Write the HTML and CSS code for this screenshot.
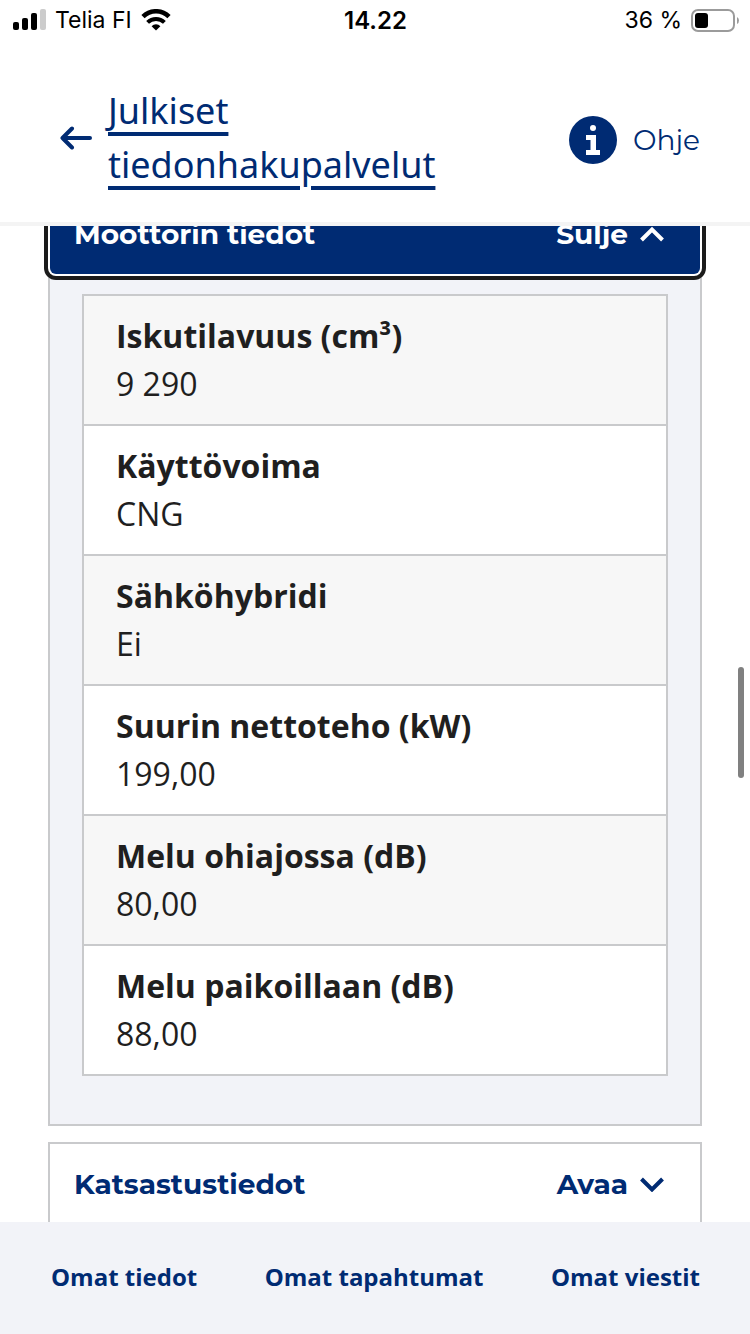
FILE: index.html
```
<!DOCTYPE html>
<html lang="fi">
<head>
  <meta charset="UTF-8" />
  <title>Julkiset tiedonhakupalvelut</title>
  <meta name="viewport" content="width=device-width, initial-scale=1.0"/>
  <link rel="stylesheet" href="styles.css">
</head>
<body>

  <!-- Status bar -->
  <div class="status-bar">
    <div class="status-left">
      <svg width="34" height="22" viewBox="0 0 34 22">
        <rect x="1" y="13" width="6" height="8" rx="2"/>
        <rect x="10" y="9" width="6" height="12" rx="2"/>
        <rect x="19" y="4" width="6" height="17" rx="2"/>
        <rect x="28" y="0" width="6" height="21" rx="2" fill="#cccccc"/>
      </svg>
      <span>Telia FI</span>
      <svg width="30" height="22" viewBox="0 0 30 22">
        <path d="M2 7.600a18.500 18.500 0 0 1 26 0" fill="none" stroke="#000" stroke-width="4.600"/>
        <path d="M6.600 13.400a12 12 0 0 1 16.800 0" fill="none" stroke="#000" stroke-width="4"/>
        <path d="M10.600 17.200a6.200 6.200 0 0 1 8.800 0L15 21.600z"/>
      </svg>
    </div>
    <span class="clock">14.22</span>
    <div class="status-right">
      <span>36 %</span>
      <svg width="48" height="23" viewBox="0 0 48 23">
        <rect x="1" y="1" width="42" height="21" rx="6" fill="none" stroke="#9b9b9b" stroke-width="2"/>
        <rect x="4" y="4" width="13" height="15" rx="3"/>
        <path d="M46 8q2 1 2 3.500t-2 3.500z" fill="#9b9b9b"/>
      </svg>
    </div>
  </div>

  <header class="top-bar">
    <a class="back-link" href="#">
      <svg width="32" height="24" viewBox="0 0 32 24" fill="none" stroke="#002b73" stroke-width="4" stroke-linecap="round" stroke-linejoin="round">
        <path d="M30 12H2.500M12 2.500L2.500 12L12 21.500"/>
      </svg>
      <span>Julkiset tiedonhakupalvelut</span>
    </a>
    <a class="help-link" href="#">
      <svg width="48" height="48" viewBox="0 0 48 48">
        <circle cx="24" cy="24" r="24" fill="#002b73"/>
        <circle cx="24" cy="12" r="3" fill="#fff"/>
        <path d="M17 19h10v15h4v5H17v-5h4.500V24H17z" fill="#fff"/>
      </svg>
      <span>Ohje</span>
    </a>
  </header>

  <main class="content">
    <section class="panel open">
      <button class="panel-toggle" type="button" aria-expanded="true" aria-controls="moottori">
        <span>Moottorin tiedot</span>
        <span class="toggle-action">Sulje
          <svg width="24" height="16" viewBox="0 0 24 16" fill="none" stroke="currentColor" stroke-width="4"><path d="M1.500 14L12 3.500L22.500 14"/></svg>
        </span>
      </button>
      <div class="panel-body" id="moottori">
        <dl class="info-list">
          <div><dt>Iskutilavuus (cm³)</dt><dd>9 290</dd></div>
          <div><dt>Käyttövoima</dt><dd>CNG</dd></div>
          <div><dt>Sähköhybridi</dt><dd>Ei</dd></div>
          <div><dt>Suurin nettoteho (kW)</dt><dd>199,00</dd></div>
          <div><dt>Melu ohiajossa (dB)</dt><dd>80,00</dd></div>
          <div><dt>Melu paikoillaan (dB)</dt><dd>88,00</dd></div>
        </dl>
      </div>
    </section>

    <section class="panel">
      <button class="panel-toggle" type="button" aria-expanded="false">
        <span>Katsastustiedot</span>
        <span class="toggle-action">Avaa
          <svg width="24" height="16" viewBox="0 0 24 16" fill="none" stroke="currentColor" stroke-width="4"><path d="M1.500 3L12 13.500L22.500 3"/></svg>
        </span>
      </button>
    </section>
  </main>

  <nav class="bottom-nav">
    <a href="#">Omat tiedot</a>
    <a href="#">Omat tapahtumat</a>
    <a href="#">Omat viestit</a>
  </nav>

  <div class="scroll-thumb"></div>

</body>
</html>
```
FILE: styles.css
```
* {
  box-sizing: border-box;
}
body {
  margin: 0;
  height: 100vh;
  display: flex;
  flex-direction: column;
  overflow: hidden;
  background: #fff;
  color: #1f1f1f;
  font-family: 'Open Sans', 'Noto Sans', sans-serif;
}
a {
  color: #002b73;
  text-decoration: none;
}
svg {
  display: block;
  flex-shrink: 0;
}

/* status bar */
.status-bar {
  display: grid;
  grid-template-columns: 1fr auto 1fr;
  align-items: center;
  height: 40px;
  padding: 0 11px 0 12px;
  flex-shrink: 0;
  font-family: Inter, sans-serif;
  font-size: 23px;
  color: #000;
}
.status-left, .status-right {
  display: flex;
  align-items: center;
  gap: 9px;
}
.status-right {
  justify-content: flex-end;
}
.clock {
  font-size: 24px;
  font-weight: 600;
}

/* header */
.top-bar {
  display: flex;
  justify-content: space-between;
  align-items: center;
  padding: 44px 50px 30px 60px;
  border-bottom: 4px solid #f4f4f4;
  flex-shrink: 0;
}
.back-link {
  display: flex;
  align-items: center;
  gap: 16px;
  max-width: 400px;
  font-family: 'Noto Sans', sans-serif;
  font-size: 36px;
  line-height: 54px;
}
.back-link span {
  text-decoration: underline;
  text-decoration-thickness: 4px;
  text-underline-offset: 8px;
}
.help-link {
  display: flex;
  align-items: center;
  gap: 16px;
  padding-top: 4px;
  font-family: Montserrat, Inter, sans-serif;
  font-size: 28px;
  font-weight: 400;
}

/* accordion, scrolled a little under the header */
.content {
  flex: 1;
  min-height: 0;
  overflow: hidden;
  padding: 0 48px;
}
.panel {
  border: 2px solid #c9cacc;
  margin-bottom: 16px;
}
.panel.open {
  margin-top: -34px;
  background: #f2f3f8;
}
.panel-toggle {
  display: flex;
  justify-content: space-between;
  align-items: center;
  width: 100%;
  height: 80px;
  padding: 0 36px 0 24px;
  border: none;
  background: #fff;
  color: #002b73;
  font-family: Montserrat, Inter, sans-serif;
  font-size: 28px;
  font-weight: 700;
}
.open .panel-toggle {
  background: #002b73;
  color: #fff;
  border-radius: 6px;
  box-shadow: 0 0 0 2px #fff, 0 0 0 6px #1b1b1b;
}
.toggle-action {
  display: flex;
  align-items: center;
  gap: 12px;
}
.panel-body {
  padding: 20px 32px 48px;
}
.info-list {
  margin: 0;
  border: 2px solid #c9cacc;
  background: #fff;
  font-size: 32px;
  line-height: 48px;
}
.info-list div {
  padding: 16px 32px;
}
.info-list div + div {
  border-top: 2px solid #c9cacc;
}
.info-list div:nth-child(odd) {
  background: #f7f7f7;
}
dt {
  font-weight: 700;
}
dd {
  margin: 0;
}

/* bottom navigation */
.bottom-nav {
  display: flex;
  justify-content: space-between;
  align-items: center;
  height: 112px;
  padding: 0 50px 4px 51px;
  flex-shrink: 0;
  background: #f2f3f8;
  font-size: 24px;
  font-weight: 700;
}

.scroll-thumb {
  position: absolute;
  top: 50%;
  right: 6px;
  width: 6px;
  height: 111px;
  border-radius: 3px;
  background: #808080;
}
```
